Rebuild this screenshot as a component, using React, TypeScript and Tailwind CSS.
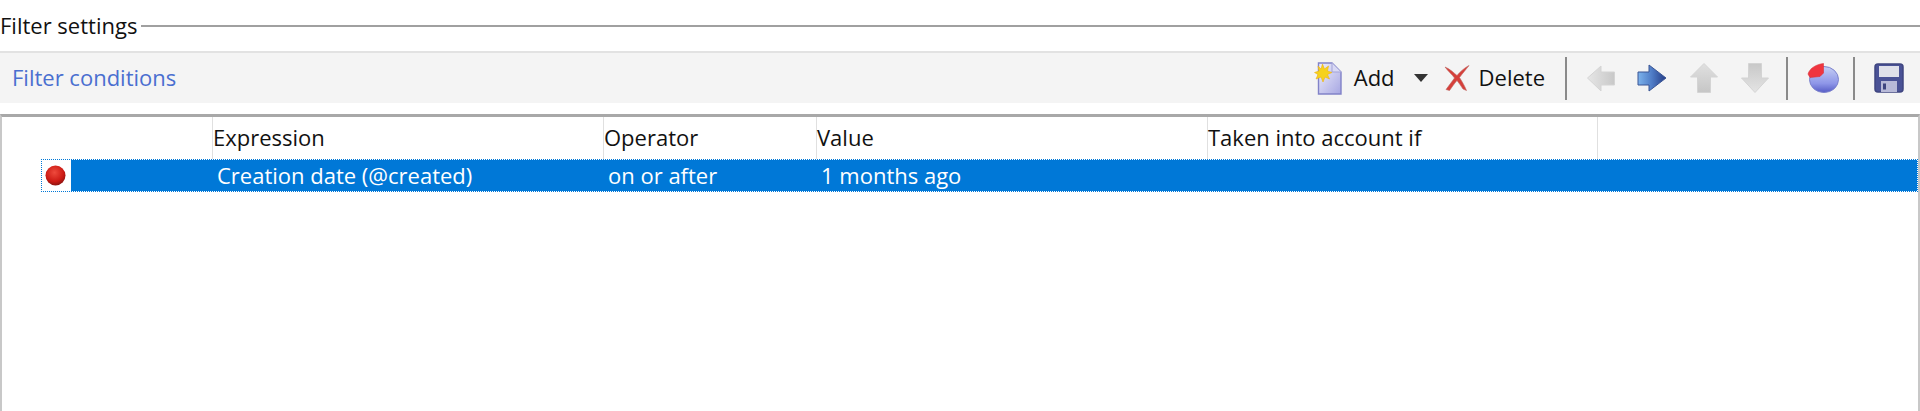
import React from 'react';

const font = { fontFamily: '"Open Sans", "Noto Sans", sans-serif' };

const AddIcon = () => (
    <svg width="28" height="33" viewBox="0 0 28 33">
        <defs>
            <linearGradient id="pageFill" x1="0" y1="0" x2="1" y2="1">
                <stop offset="0" stopColor="#f0f0fc" />
                <stop offset="1" stopColor="#a6a6e2" />
            </linearGradient>
        </defs>
        <path d="M4.500 1H18L27 10V32H4.500Z" fill="url(#pageFill)" stroke="#8182c8" strokeWidth="1.400" />
        <path d="M18 1V10H27" fill="#d9d9f4" stroke="#a3a3d8" strokeWidth="1" />
        <path d="M8.500 2L10.500 7L14.500 4L13.500 9L18 10.500L13.500 12.500L15.500 17L11 15L9 20L7 15L2 17L4 12.500L0.500 10.500L5 9L4 4L7 7Z" fill="#f6d21c" stroke="#eeb212" strokeWidth="0.600" />
    </svg>
);

const DeleteIcon = () => (
    <svg width="26" height="26" viewBox="0 0 26 26">
        <path d="M1 2C6 4 10 8 13 10.500C16 7 20 3 25 0.500C22 4.500 18 9 15.500 12.500C18 16.500 20.500 20.500 22.500 25.500L19 24C17 21 15 18 13 15.500C10 19 8 22 5.500 25.500L2 24.500C5 20.500 8 16.500 10.500 13C8 9.500 4 6 1 2Z" fill="#d63f3a" stroke="#bd6460" strokeWidth="0.600" />
    </svg>
);

const LeftArrowIcon = () => (
    <svg width="28" height="28" viewBox="0 0 28 28">
        <defs>
            <linearGradient id="greyH" x1="0" y1="0" x2="1" y2="0">
                <stop offset="0" stopColor="#e6e6e6" />
                <stop offset="1" stopColor="#c8c8c8" />
            </linearGradient>
        </defs>
        <path d="M0.500 14L14 2V8H27.500V21H14V27Z" fill="url(#greyH)" stroke="#d4d4d4" strokeWidth="1" />
    </svg>
);

const RightArrowIcon = () => (
    <svg width="30" height="28" viewBox="0 0 30 28">
        <defs>
            <linearGradient id="blueH" x1="0" y1="0" x2="1" y2="0">
                <stop offset="0" stopColor="#7db3ec" />
                <stop offset="0.5" stopColor="#4f7cc6" />
                <stop offset="1" stopColor="#243c86" />
            </linearGradient>
        </defs>
        <path d="M1 8H12V1L29 14L12 27V21H1Z" fill="url(#blueH)" stroke="#3a5594" strokeWidth="1" />
    </svg>
);

const UpArrowIcon = () => (
    <svg width="28" height="30" viewBox="0 0 28 30">
        <defs>
            <linearGradient id="greyV" x1="0" y1="0" x2="0" y2="1">
                <stop offset="0" stopColor="#e0e0e0" />
                <stop offset="1" stopColor="#c6c6c6" />
            </linearGradient>
        </defs>
        <path d="M14 0.500L27.500 14H20.500V29.500H7.500V14H0.500Z" fill="url(#greyV)" stroke="#d4d4d4" strokeWidth="1" />
    </svg>
);

const DownArrowIcon = () => (
    <svg width="28" height="30" viewBox="0 0 28 30">
        <defs>
            <linearGradient id="greyD" x1="0" y1="0" x2="0" y2="1">
                <stop offset="0" stopColor="#c8c8c8" />
                <stop offset="1" stopColor="#e4e4e4" />
            </linearGradient>
        </defs>
        <path d="M7.500 0.500H20.500V15H27.500L14 29.500L0.500 15H7.500Z" fill="url(#greyD)" stroke="#d4d4d4" strokeWidth="1" />
    </svg>
);

const PieIcon = () => (
    <svg width="32" height="30" viewBox="0 0 32 30">
        <defs>
            <linearGradient id="pieFill" x1="0" y1="0" x2="0" y2="1">
                <stop offset="0" stopColor="#c6cff4" />
                <stop offset="0.65" stopColor="#8e96e8" />
                <stop offset="1" stopColor="#565cc6" />
            </linearGradient>
        </defs>
        <ellipse cx="17" cy="16.500" rx="14.500" ry="13" fill="url(#pieFill)" stroke="#7c82cc" strokeWidth="1" />
        <path d="M1 11C3 5 9 1.500 16.500 0.500L16.500 10L13 13.500L3 14.500Z" fill="#f0353f" stroke="#d8323a" strokeWidth="0.600" />
    </svg>
);

const SaveIcon = () => (
    <svg width="30" height="30" viewBox="0 0 30 30">
        <rect x="1" y="1" width="28" height="28" rx="3" fill="#4a5296" stroke="#3f4680" strokeWidth="1.500" />
        <rect x="5" y="3" width="20" height="11" fill="#dfe0ea" />
        <rect x="7" y="18" width="16" height="11" fill="#b8bad8" />
        <rect x="9" y="20.500" width="3" height="6" fill="#3f4680" />
    </svg>
);

const Separator = () => <div className="h-[43px] w-[2px] bg-[#8a8a8a]" />;

const RecordIcon = () => (
    <svg width="21" height="21" viewBox="0 0 21 21">
        <defs>
            <radialGradient id="dot" cx="0.45" cy="0.35" r="0.7">
                <stop offset="0" stopColor="#ee4a3c" />
                <stop offset="0.65" stopColor="#cc1a14" />
                <stop offset="1" stopColor="#7c1210" />
            </radialGradient>
        </defs>
        <circle cx="10.500" cy="10.500" r="10" fill="url(#dot)" />
    </svg>
);

const columns = [
    { label: 'Expression', width: 'w-[391px]' },
    { label: 'Operator', width: 'w-[213px]' },
    { label: 'Value', width: 'w-[391px]' },
    { label: 'Taken into account if', width: 'w-[390px]' },
];

const cells = [
    { text: 'Creation date (@created)', width: 'w-[391px]' },
    { text: 'on or after', width: 'w-[213px]' },
    { text: '1 months ago', width: 'w-[391px]' },
];

export default function App() {
    return (
        <div className="flex h-[411px] w-[1920px] flex-col overflow-hidden bg-white text-[22px] text-[#111111]" style={font}>
            <div className="flex h-[51px] items-center pt-[1px]">
                <span className="pb-[2px] leading-none">Filter settings</span>
                <div className="ml-[4px] h-[2px] flex-1 bg-[#a0a0a0]" />
            </div>

            <div className="flex h-[52px] items-center border-t-2 border-[#e2e2e2] bg-[#f4f4f4] pl-[12px] pr-[16px]">
                <span className="pb-[2px] text-[#4a6fd0]">Filter conditions</span>
                <div className="ml-auto flex items-center">
                    <AddIcon />
                    <span className="ml-[12px] pb-[2px]">Add</span>
                    <div className="ml-[19px] h-0 w-0 border-x-[7px] border-t-[8px] border-x-transparent border-t-[#333333]" />
                    <div className="ml-[16px]"><DeleteIcon /></div>
                    <span className="ml-[9px] pb-[2px]">Delete</span>
                    <div className="ml-[20px]"><Separator /></div>
                    <div className="ml-[20px]"><LeftArrowIcon /></div>
                    <div className="ml-[22px]"><RightArrowIcon /></div>
                    <div className="ml-[23px]"><UpArrowIcon /></div>
                    <div className="ml-[23px]"><DownArrowIcon /></div>
                    <div className="ml-[17px]"><Separator /></div>
                    <div className="ml-[19px]"><PieIcon /></div>
                    <div className="ml-[14px]"><Separator /></div>
                    <div className="ml-[19px]"><SaveIcon /></div>
                </div>
            </div>

            <div className="mt-[11px] flex flex-1 flex-col border-x-2 border-t-[3px] border-x-[#c8c8c8] border-t-[#a8a8a8]">
                <div className="flex h-[42px] items-center pl-[210px]">
                    {columns.map((col) => (
                        <div key={col.label} className={`flex h-full items-center border-l border-[#e0e0e0] pb-[2px] ${col.width}`}>
                            {col.label}
                        </div>
                    ))}
                    <div className="h-full border-l border-[#e0e0e0]" />
                </div>

                <div className="ml-[39px] flex h-[33px] border border-dotted border-[#0078d7] text-white">
                    <div className="flex w-[29px] items-center pl-[3px]">
                        <RecordIcon />
                    </div>
                    <div className="flex flex-1 items-center bg-[#0078d7] pl-[146px]">
                        {cells.map((cell) => (
                            <div key={cell.text} className={`${cell.width}`}>
                                {cell.text}
                            </div>
                        ))}
                    </div>
                </div>
            </div>
        </div>
    );
}
